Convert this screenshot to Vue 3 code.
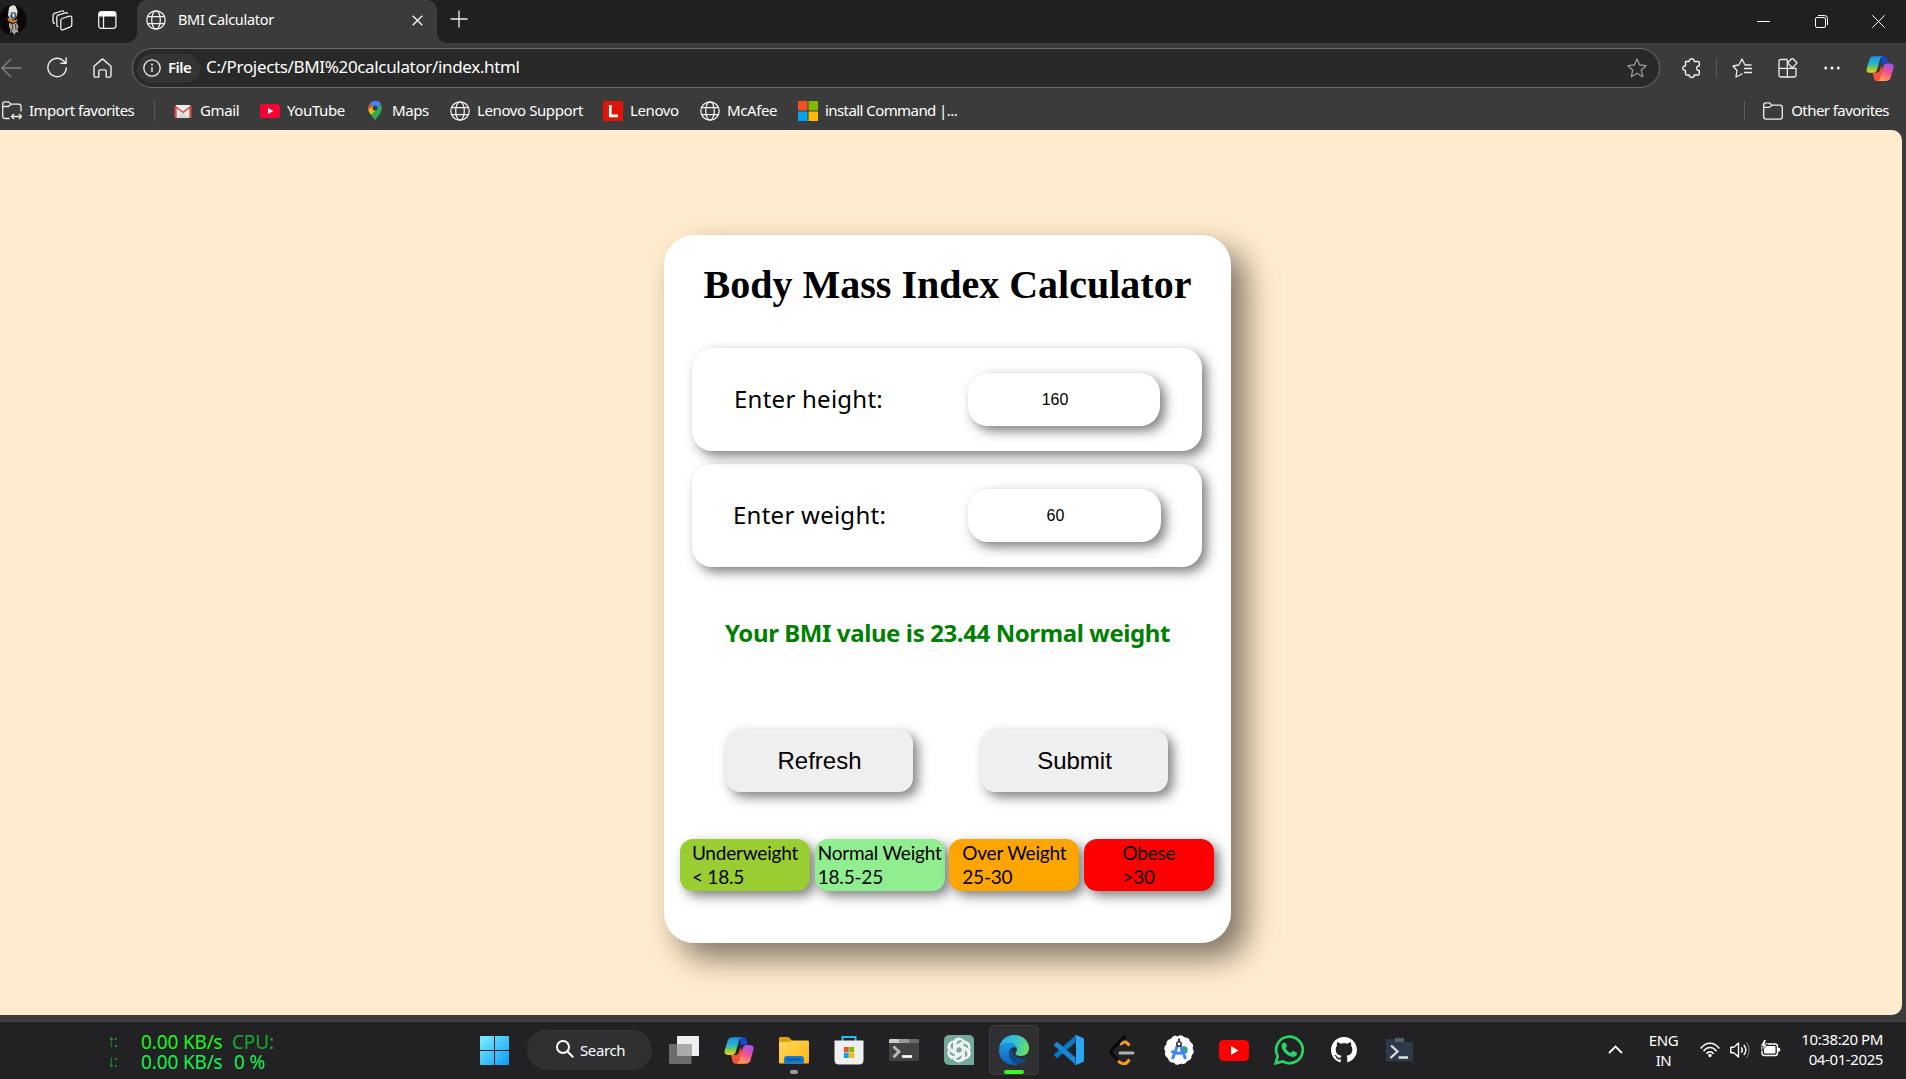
<script setup>
const bookmarks = [
  { icon: 'gmail', label: 'Gmail', w: 87 },
  { icon: 'youtube', label: 'YouTube', w: 105 },
  { icon: 'maps', label: 'Maps', w: 85 },
  { icon: 'globe', label: 'Lenovo Support', w: 153 },
  { icon: 'lenovo', label: 'Lenovo', w: 97 },
  { icon: 'globe', label: 'McAfee', w: 98 },
  { icon: 'ms', label: 'install Command |...', w: 170 },
]
const legend = [
  { name: 'Underweight', range: '< 18.5', cls: 'under' },
  { name: 'Normal Weight', range: '18.5-25', cls: 'normal' },
  { name: 'Over Weight', range: '25-30', cls: 'over' },
  { name: 'Obese', range: '>30', cls: 'obese' },
]
const petals = [0, 60, 120, 180, 240, 300]
</script>

<template>
  <div class="screen">
    <svg width="0" height="0" class="defs">
      <defs>
        <linearGradient id="cpA" x1="0" y1="0" x2="0" y2="1">
          <stop offset="0" stop-color="#1b8fe8" /><stop offset=".45" stop-color="#25b6c8" />
          <stop offset=".7" stop-color="#7cc94f" /><stop offset="1" stop-color="#f2cf1c" />
        </linearGradient>
        <linearGradient id="cpB" x1=".7" y1="0" x2=".3" y2="1">
          <stop offset="0" stop-color="#9a55f0" /><stop offset=".45" stop-color="#ee5090" />
          <stop offset="1" stop-color="#ffa552" />
        </linearGradient>
        <linearGradient id="winG" x1="0" y1="0" x2="1" y2="1">
          <stop offset="0" stop-color="#7df0ff" /><stop offset="1" stop-color="#0a9bfa" />
        </linearGradient>
        <linearGradient id="foldG" x1="0" y1="0" x2="1" y2="1">
          <stop offset="0" stop-color="#ffd75e" /><stop offset="1" stop-color="#fdb813" />
        </linearGradient>
        <linearGradient id="edgeG" x1="0" y1=".3" x2="1" y2=".5">
          <stop offset="0" stop-color="#2aa5ea" /><stop offset=".5" stop-color="#31c3d8" />
          <stop offset="1" stop-color="#6ae05a" />
        </linearGradient>
        <linearGradient id="edgeB" x1="0" y1="0" x2="0" y2="1">
          <stop offset="0" stop-color="#1d9ae6" /><stop offset="1" stop-color="#1160b8" />
        </linearGradient>
        <symbol id="copilot" viewBox="0 0 30 28">
          <path d="M16 .8h3.2c2 0 2.8 1.2 3.3 2.8l1.4 4.6h-4.6c-1.5 0-2.2.8-2.7 2.3z" fill="#1746d0" />
          <path d="M7.2 18.4h5.2c1 0 1.8-.6 2.2-1.8l2.4-6 1.2 8.6-2 6.2c-.5 1.4-1.3 1.9-2.6 1.9h-2c-1.8 0-2.7-1-3.2-2.7z" fill="#f4553a" />
          <path d="M8.6.8H18c-1.8.4-2.5 1.7-3 3.4l-3.2 11c-.6 2-1.5 3.3-3.8 3.3H4.3C1 18.500 0 16.400.8 13.600L3.600 4.600C4.400 2 5.900.8 8.600.8z" fill="url(#cpA)" />
          <path d="M21.600 27.300h-9.200c1.800-.4 2.500-1.700 3-3.400l3.200-11.800c.6-2 1.500-3.500 3.800-3.500h3.500c3.300 0 4.300 2.200 3.500 5l-2.800 9.900c-.8 2.600-2.300 3.800-5 3.800z" fill="url(#cpB)" />
        </symbol>
        <symbol id="globe" viewBox="0 0 20 20">
          <g fill="none" stroke="#f2f2f2" stroke-width="1.25">
            <circle cx="10" cy="10" r="9.200" /><ellipse cx="10" cy="10" rx="4.300" ry="9.200" />
            <path d="M1.700 6.500h16.600M1.700 13.500h16.600" />
          </g>
        </symbol>
        <symbol id="mslogo" viewBox="0 0 20 20">
          <path d="M0 0h9.500v9.500H0z" fill="#f25022" /><path d="M10.500 0H20v9.500h-9.500z" fill="#7fba00" />
          <path d="M0 10.500h9.500V20H0z" fill="#00a4ef" /><path d="M10.500 10.500H20V20h-9.500z" fill="#ffb900" />
        </symbol>
      </defs>
    </svg>

    <header class="tabs">
      <div class="tools-left">
        <svg class="avatar" width="27" height="30" viewBox="0 0 27 30">
          <ellipse cx="12.500" cy="15" rx="14" ry="15" fill="#0c0809" />
          <path d="M9 3c1-3 6-4 7-1l1.500 4-.5 5-3 3h-4L8 10z" fill="#e4e2dd" />
          <path d="M11 7.500l3.500-.5 2 2-.5 4-4 1-2-2z" fill="#3c5870" /><path d="M12.500 8l2 1v3.500l-2-1z" fill="#e8eef0" />
          <path d="M7.500 12.500l3 1.500 5 1 2-1.500-.5 3-4 1.500-5-2z" fill="#c77a22" />
          <path d="M9 18l4 1 3-1.500 2.500 3.500-1 3 1 4-2.500-1-1.500 3-2.500-3-2 1 .5-4-1.500-2z" fill="#aaa39e" />
          <path d="M12 19l1 4-2 4M15.500 19l.5 6" stroke="#4a4240" fill="none" />
        </svg>
        <svg class="ws" width="21" height="21" viewBox="0 0 21 21" fill="none" stroke="#eee" stroke-width="1.300" stroke-linejoin="round">
          <path d="M10 8.500l7.500-2.300c1.300-.4 2.300.3 2.300 1.600v7c0 1-.5 1.700-1.500 2L11 19.800c-1.300.4-2.200-.2-2.200-1.500v-8c0-1 .3-1.500 1.200-1.800z" />
          <path d="M6.600 16.500c-1 .2-1.800-.4-1.800-1.500v-8c0-1 .4-1.600 1.300-1.900l7.400-2.300c1.200-.4 2 .1 2.200 1.200" />
          <path d="M3 13.500c-1.200 0-1.900-.6-1.900-1.600V5.300c0-1 .4-1.600 1.300-1.900L9.600 1c1.200-.4 2 .1 2.200 1" />
        </svg>
        <svg class="vt" width="19" height="18" viewBox="0 0 19 18">
          <rect x=".7" y=".7" width="17.200" height="16.600" rx="2.500" fill="none" stroke="#eee" stroke-width="1.300" />
          <path d="M1 5.500V3a2 2 0 0 1 2-2h12.600a2 2 0 0 1 2 2v2.500z" fill="#fff" /><path d="M5.500 5v12" stroke="#eee" stroke-width="1.300" />
        </svg>
      </div>
      <div class="tab">
        <svg width="20" height="20"><use href="#globe" /></svg>
        <span class="tab-title">BMI Calculator</span>
        <svg class="tab-x" width="11" height="11" viewBox="0 0 11 11"><path d="M.7.7l9.600 9.600M10.300.7L.7 10.300" stroke="#fff" stroke-width="1.300" /></svg>
      </div>
      <svg class="plus" width="18" height="18" viewBox="0 0 18 18"><path d="M9 .5v17M.5 9h17" stroke="#eee" stroke-width="1.300" /></svg>
      <div class="win">
        <svg width="13" height="13" viewBox="0 0 13 13"><path d="M0 6.500h13" stroke="#fff" /></svg>
        <svg width="13" height="13" viewBox="0 0 13 13" fill="none" stroke="#fff"><rect x=".5" y="2.500" width="10" height="10" rx="1.500" /><path d="M3 .5h6.500a3 3 0 0 1 3 3V10" /></svg>
        <svg width="13" height="13" viewBox="0 0 13 13"><path d="M.3.300l12.400 12.400M12.700.3L.3 12.700" stroke="#fff" /></svg>
      </div>
    </header>

    <nav class="toolbar">
      <div class="nav-btns">
        <svg width="21" height="20" viewBox="0 0 21 20" fill="none" stroke="#838383" stroke-width="1.300"><path d="M20.500 10H1M10 1L1 10l9 9" /></svg>
        <svg width="21" height="21" viewBox="0 0 21 21" fill="none" stroke="#eee" stroke-width="1.400"><path d="M19.300 10.500a9.200 9.200 0 1 1-3.200-7L18.800 6M19.100.5V6.300H13.500" /></svg>
        <svg width="19" height="20" viewBox="0 0 19 20" fill="none" stroke="#eee" stroke-width="1.400" stroke-linejoin="round"><path d="M1 8.300L9.500.9 18 8.300v9.500c0 .8-.5 1.300-1.300 1.300h-3.500v-5.600c0-1-.5-1.600-1.500-1.600H7.300c-1 0-1.500.6-1.500 1.600v5.600H2.300c-.8 0-1.300-.5-1.300-1.300z" /></svg>
      </div>
      <div class="address">
        <div class="file">
          <svg width="18" height="18" viewBox="0 0 18 18"><circle cx="9" cy="9" r="8.200" fill="none" stroke="#eee" stroke-width="1.300" /><path d="M9 8v5" stroke="#eee" stroke-width="1.400" /><circle cx="9" cy="5.500" r="1" fill="#eee" /></svg>
          <b>File</b>
        </div>
        <span class="url">C:/Projects/BMI%20calculator/index.html</span>
        <svg class="star" width="20" height="20" viewBox="0 0 20 20" fill="none" stroke="#999" stroke-width="1.300" stroke-linejoin="round"><path d="M10 1l2.700 6 6.400.7-4.800 4.400 1.400 6.600L10 15.300l-5.700 3.400 1.400-6.600L.9 7.700 7.300 7z" /></svg>
      </div>
      <div class="tool-icons">
        <svg class="puz" width="19" height="20" viewBox="0 0 19 20" fill="none" stroke="#eee" stroke-width="1.400" stroke-linejoin="round"><path d="M3.500 3.500h3.800c-.3-3.600 5.200-3.600 4.900 0H16c.8 0 1.300.5 1.300 1.300V8c-3.600-.6-3.600 5 0 4.400v3.300c0 .8-.5 1.300-1.300 1.300h-3.800c.3 3.300-5.200 3.300-4.900 0H4.800c-.8 0-1.300-.5-1.300-1.300v-3.300c-3.600.3-3.600-4.700 0-4.400z" /></svg>
        <i class="sep"></i>
        <svg class="favs" width="21" height="20" viewBox="0 0 21 20" fill="none" stroke="#eee" stroke-width="1.300" stroke-linejoin="round"><path d="M8 17l-4 2 1-6.500L1 8l5.800-1L10 1l3 6h6.500M12 10.500h8M12 14.500h8M8 17l2.500-1.500" /></svg>
        <svg class="apps" width="20" height="20" viewBox="0 0 20 20" fill="none" stroke="#eee" stroke-width="1.300"><path d="M9.300 1.500H2.700C1.600 1.500 1 2.200 1 3.200v14.100c0 1 .7 1.700 1.700 1.700h13.600c1 0 1.700-.7 1.700-1.700v-7H1M9.300 1.500V19" /><rect x="11" y="1.500" width="6.800" height="6.800" rx="1" transform="rotate(45 14.400 4.900)" /></svg>
        <svg class="dots" width="16" height="4" viewBox="0 0 16 4" fill="#f2f2f2"><circle cx="1.700" cy="2" r="1.500" /><circle cx="8" cy="2" r="1.500" /><circle cx="14.300" cy="2" r="1.500" /></svg>
        <svg width="28" height="27"><use href="#copilot" /></svg>
      </div>
    </nav>

    <div class="bookmarks">
      <div class="bm import">
        <svg width="20" height="19" viewBox="0 0 20 19" fill="none" stroke="#eee" stroke-width="1.300"><path d="M7.500 17.500H3c-1.500 0-2.300-.8-2.300-2.300V3C.7 1.500 1.500.8 3 .8h3.500l2.500 2.400h7.700c1.500 0 2.300.8 2.300 2.300v5M.7 5.500h5.500L9 3.200M9.500 15.500h10M12 13l-2.500 2.500L12 18M17 13l2.500 2.500L17 18" /></svg>
        <span class="tight">Import favorites</span>
      </div>
      <i class="sep"></i>
      <div class="bm-list">
        <div v-for="b in bookmarks" :key="b.label" class="bm" :style="{ width: b.w + 'px' }">
          <svg v-if="b.icon === 'gmail'" width="20" height="20" viewBox="0 0 20 20"><path d="M3 4h14v13H3z" fill="#eee" /><path d="M3 17l7-6 7 6z" fill="#d8d8d8" /><path d="M1.500 17V4l8.500 6.500L18.500 4v13h-2.200V7.500L10 12.300 3.700 7.500V17z" fill="#dd4b3e" /></svg>
          <svg v-else-if="b.icon === 'youtube'" width="20" height="20" viewBox="0 0 20 20"><rect y="3" width="20" height="14" rx="3.500" fill="#ff0033" /><path d="M8 7l5.300 3L8 13z" fill="#fff" /></svg>
          <svg v-else-if="b.icon === 'maps'" width="20" height="20" viewBox="0 0 20 20"><path d="M10 20c-.8-4-6.800-6.500-6.800-12.800a6.800 6.800 0 0 1 13.600 0C16.800 13.500 10.800 16 10 20z" fill="#34a853" /><path d="M4.800 2.800a6.800 6.800 0 0 1 11-.4L9.500 9.500z" fill="#4285f4" /><path d="M12.600 7.700L6 13.400C4.500 11.500 3.500 10 3.300 8.500L8 4.500z" fill="#fbbc04" /><path d="M3.300 8.500C3 6 3.500 4.200 4.800 2.800L7.500 5z" fill="#ea4335" /><circle cx="10" cy="7" r="2.500" fill="#263f6e" /></svg>
          <svg v-else-if="b.icon === 'lenovo'" width="20" height="20" viewBox="0 0 20 20"><path d="M0 0h20v20H0z" fill="#e1140a" /><path d="M7.300 4v10.800H15" fill="none" stroke="#fff" stroke-width="2.700" /></svg>
          <svg v-else-if="b.icon === 'ms'" width="20" height="20"><use href="#mslogo" /></svg>
          <svg v-else width="20" height="20"><use href="#globe" /></svg>
          <span :class="{ tight: b.icon === 'ms' }">{{ b.label }}</span>
        </div>
      </div>
      <div class="bm other">
        <i class="sep"></i>
        <svg width="20" height="18" viewBox="0 0 20 18" fill="none" stroke="#eee" stroke-width="1.300"><path d="M3 .8h3.500l2.500 2.400h8c1.500 0 2.300.8 2.300 2.300v9.300c0 1.500-.8 2.300-2.300 2.300H3c-1.500 0-2.300-.8-2.300-2.300V3C.7 1.500 1.500.8 3 .8zM.7 5.300h5.500L9 3.200" /></svg>
        <span class="tight">Other favorites</span>
      </div>
    </div>

    <main class="page">
      <section class="card">
        <h1>Body Mass Index Calculator</h1>
        <div class="field">
          <label>Enter height:</label>
          <div class="input">160</div>
        </div>
        <div class="field second">
          <label class="lw">Enter weight:</label>
          <div class="input wide">60</div>
        </div>
        <p class="result">Your BMI value is 23.44 Normal weight</p>
        <div class="buttons">
          <button>Refresh</button>
          <button>Submit</button>
        </div>
        <div class="legend">
          <div v-for="l in legend" :key="l.name" class="chip" :class="l.cls">
            <div>{{ l.name }}<br />{{ l.range }}</div>
          </div>
        </div>
      </section>
    </main>

    <footer class="taskbar">
      <div class="net">
        <span class="dim arrow">↑:</span><span class="a">0.00 KB/s</span><span class="dim">CPU:</span>
        <span class="dim arrow">↓:</span><span class="b">0.00 KB/s</span><span class="b pc">0 %</span>
      </div>
      <svg class="start" width="29" height="29" viewBox="0 0 29 29"><path d="M0 1a1 1 0 0 1 1-1h13v14H0zM15 0h13a1 1 0 0 1 1 1v13H15zM0 15h14v14H1a1 1 0 0 1-1-1zM15 15h14v13a1 1 0 0 1-1 1H15z" fill="url(#winG)" /></svg>
      <div class="search">
        <svg width="18" height="18" viewBox="0 0 18 18" fill="none" stroke="#fff" stroke-width="2"><circle cx="7" cy="7" r="6" /><path d="M11.500 11.500L17.200 17.200" /></svg>
        <span>Search</span>
      </div>
      <div class="apps-row">
        <div class="slot"><svg width="30" height="30" viewBox="0 0 30 30"><rect x="8" y="1" width="22" height="20" rx="1" fill="#efefef" /><rect y="9" width="22.500" height="20" rx="1" fill="#6c6c6c" /><path d="M8 9h14.500v12H8z" fill="#aaa" /></svg></div>
        <div class="slot"><svg width="30" height="29"><use href="#copilot" /></svg></div>
        <div class="slot"><svg width="30" height="30" viewBox="0 0 30 30"><path d="M0 3.500C0 2.500.6 2 1.500 2h7c1 0 1.500.3 2.200 1L13 5.500V12H0z" fill="#dfa00b" /><path d="M0 7h10l3-1.500h15.500c1 0 1.500.5 1.500 1.500v20c0 1-.5 1.500-1.500 1.500h-27C.5 28.500 0 28 0 27z" fill="url(#foldG)" /><path d="M5 28.500V24c0-2 1-3 3-3h14c2 0 3 1 3 3v4.500z" fill="#1479d0" /><path d="M8 24.500h14" stroke="#0b4f94" stroke-width="1.500" /></svg><i class="run"></i></div>
        <div class="slot"><svg width="30" height="30" viewBox="0 0 30 30"><path d="M8.500 6V2h13v4" fill="none" stroke="#25bdf0" stroke-width="2" /><path d="M.5 5.500h29V25c0 3-1.500 4.500-4.500 4.500H5C2 29.500.5 28 .5 25z" fill="#efefef" /><svg x="9.500" y="12" width="11" height="11"><use href="#mslogo" /></svg></svg></div>
        <div class="slot"><svg width="30" height="22" viewBox="0 0 30 22"><rect width="30" height="22" rx="1.500" fill="#434343" /><path d="M0 4V1.500C0 .5.500 0 1.500 0H10v4z" fill="#ccc" /><path d="M10 0h10v4H10z" fill="#999" /><path d="M20 0h8.500c1 0 1.500.5 1.500 1.500V4H20z" fill="#6b6b6b" /><path d="M4.500 7.500l5.500 5.300-5.500 5.400" fill="none" stroke="#bbb" stroke-width="2.800" /><path d="M13 17.500h10" stroke="#fff" stroke-width="2.700" /></svg></div>
        <div class="slot"><svg width="30" height="30" viewBox="0 0 30 30"><path d="M5 0h20a5 5 0 0 1 5 5v25H5a5 5 0 0 1-5-5V5a5 5 0 0 1 5-5z" fill="#74aa9c" /><g fill="none" stroke="#fff" stroke-width="1.600"><path v-for="a in petals" :key="a" :transform="`rotate(${a} 15 15)`" d="M11.500 17V9.200c0-5.300 6.800-6.800 8.900-2.300M11.500 11l6.700-3.800c4.200-2.300 8.500 1.800 7 6" /></g></svg></div>
        <div class="slot active"><svg width="30" height="30" viewBox="0 0 30 30"><path d="M0 15C0 6.500 6.500 0 15 0s15 6 15 13c0 5-3.500 8-8 8-3.500 0-5.500-1.300-5.500-2.600 0-1 1.500-1.400 1.500-4.200C18 11 14.500 8 10 8 5 8 0 11 0 15z" fill="url(#edgeG)" /><path d="M0 15.500C.3 11 4.500 8 9.500 8c5 0 8.500 3 8.500 6-1-1.800-3-2.500-4.500-1.700C11.500 13.500 8.500 17 11 23c1.500 3.500 5 6 8.500 6.300C17 30 15.500 30 14 30 6 29.500 0 23.500 0 15.500z" fill="url(#edgeB)" /><path d="M13.200 12.600C10 14 9 18 10.500 22c2 5 6.500 7.500 10.500 6.700 3-1 5.500-3.300 7.200-6.200-2.200 1.200-6 1.900-9.500.2-4.500-2.200-7-6-5.500-10.100z" fill="#114a8b" /></svg><i class="run green"></i></div>
        <div class="slot"><svg width="30" height="30" viewBox="0 0 30 30"><path d="M22 0l-1 8L4 22.500c-.6.400-1.200.4-1.700 0L.5 20.800c-.6-.6-.6-1.300 0-1.900z" fill="#0a78c4" /><path d="M22 30l-1-8L4 7.500c-.6-.4-1.200-.4-1.700 0L.5 9.200c-.6.600-.6 1.300 0 1.900z" fill="#1688d4" /><path d="M22 0l7 3c.7.300 1 .8 1 1.500v21c0 .7-.3 1.200-1 1.500l-7 3c-1 .3-1.500 0-2-.5 1.200.8 2-.1 2-1V1.500c0-1-.8-1.800-2-1 .5-.6 1-.8 2-.5z" fill="#2aa7f2" /><path d="M22 8v14l-9-7z" fill="#222224" /></svg></div>
        <div class="slot"><svg width="30" height="30" viewBox="0 0 30 30" fill="none" stroke-linecap="round" stroke-width="3"><path d="M11 9.500l3-2c1.500-.7 3-.5 4.200.6l2.300 2.400M9 26l3 2c2 1 4.500 1 6-.6l2.500-2.900" stroke="#f79f1a" stroke-linecap="butt" /><path d="M15.500 2L3 14.500c-1.300 1.400-1.300 3.100 0 4.500l5 5.500" stroke="#080808" /><path d="M11 18h13" stroke="#b3b1b0" /></svg></div>
        <div class="slot"><svg width="30" height="30" viewBox="0 0 30 30"><circle cx="15" cy="15" r="14" fill="#fff" /><circle cx="15" cy="15" r="14" fill="none" stroke="#fff" stroke-width="1.500" stroke-dasharray="4 3.300" /><circle cx="20" cy="15" r="3.700" fill="#34a853" /><path d="M14 9L8.500 24M16 9l5.500 15M7.500 16c3 3 12 3 15 0" fill="none" stroke="#4285f4" stroke-width="3" /><path d="M15 3.500v4" stroke="#333" stroke-width="2" /><circle cx="15" cy="9" r="2.200" fill="#fff" stroke="#333" stroke-width="1.500" /></svg></div>
        <div class="slot"><svg width="30" height="21" viewBox="0 0 30 21"><rect width="30" height="21" rx="4.500" fill="#f00" /><path d="M12 6l7.500 4.500L12 15z" fill="#fff" /></svg></div>
        <div class="slot"><svg width="30" height="30" viewBox="0 0 30 30"><path d="M1.800 28.200l1.900-7A13.300 13.300 0 1 1 8.700 26.400z" fill="none" stroke="#2bd467" stroke-width="2.700" /><path d="M10.500 7.500c-.6-.4-2.700.4-3 3-.2 3 3 7.500 6.500 9.800 4 2.200 7 2 8.300.2.900-1.300.8-2.600.3-3l-3.200-1.600c-.5-.2-.8 0-1.100.3l-1.300 1.600c-.5.4-3.500-1.200-5.400-4.300-.2-.5.9-1.300 1.300-2.300.3-.7-1.200-3.700-2.400-3.700z" fill="#2bd467" /></svg></div>
        <div class="slot"><svg width="26" height="26" viewBox="0 0 16 16"><path fill="#fff" d="M8 0C3.580 0 0 3.580 0 8c0 3.540 2.290 6.530 5.470 7.590.4.070.55-.17.55-.38 0-.19-.01-.82-.01-1.490-2.010.37-2.530-.49-2.690-.94-.09-.23-.48-.94-.82-1.130-.28-.15-.68-.52-.01-.53.63-.01 1.080.58 1.230.82.720 1.210 1.870.87 2.330.66.070-.52.280-.87.510-1.070-1.780-.2-3.640-.89-3.640-3.950 0-.87.310-1.590.82-2.150-.08-.2-.36-1.020.08-2.120 0 0 .67-.21 2.200.82.640-.18 1.320-.27 2-.27s1.360.09 2 .27c1.530-1.040 2.200-.82 2.200-.82.440 1.100.16 1.920.08 2.120.51.560.82 1.270.82 2.150 0 3.070-1.870 3.750-3.650 3.950.29.250.54.730.54 1.480 0 1.070-.01 1.930-.01 2.200 0 .21.150.46.550.38A8.010 8.010 0 0 0 16 8c0-4.420-3.580-8-8-8z" /></svg></div>
        <div class="slot"><svg width="27" height="24" viewBox="0 0 27 24"><path d="M0 1h27v22.500H0z" fill="#2c3a49" /><path d="M9 0h9v4H9z" fill="#555f6a" /><path d="M18 0h9v4h-9z" fill="#222224" /><path d="M5 7.500l6.500 6-7 6.500" fill="none" stroke="#ddd" stroke-width="2.300" /><path d="M12.500 19.500h9.500" stroke="#ddd" stroke-width="2.600" /></svg></div>
      </div>
      <div class="tray">
        <svg class="caret" width="15" height="9" viewBox="0 0 15 9"><path d="M1 8l6.500-6.500L14 8" fill="none" stroke="#fff" stroke-width="1.800" /></svg>
        <div class="lang"><span>ENG</span><span>IN</span></div>
        <svg class="wifi" width="20" height="16" viewBox="0 0 20 16" fill="none" stroke="#fff" stroke-width="1.600"><path d="M.7 6.500c5.200-7 13.400-7 18.600 0M3.600 9.300c3.600-5 9.200-5 12.800 0M6.500 11.800c2-2.700 5-2.700 7 0" /><circle cx="10" cy="13.500" r="1.700" fill="#fff" stroke="none" /></svg>
        <svg class="vol" width="20" height="18" viewBox="0 0 20 18" fill="none" stroke="#fff" stroke-width="1.400"><path d="M.8 6.300h3L8.500 2v14l-4.700-4.300h-3z" stroke-linejoin="round" /><path d="M11.300 6.300c1.200 1.600 1.200 3.800 0 5.400M13.800 4c2.500 3 2.500 7 0 10" /><path d="M16.500 1.500c3.600 4.500 3.600 10.500 0 15" stroke="#666" /></svg>
        <svg class="bat" width="21" height="17" viewBox="0 0 21 17"><rect x="2" y="4" width="15.500" height="11.500" rx="2.500" fill="none" stroke="#fff" stroke-width="1.400" /><rect x="4" y="6" width="11.500" height="7.500" rx="1" fill="#fff" /><path d="M18 8h1.500c1 0 1 3.500 0 3.500H18z" fill="#fff" /><path d="M4-.5L.5 6h2.700l-1.500 5L7.500 4.300H4.800L6.500-.5z" fill="#fff" stroke="#222224" stroke-width=".8" /></svg>
        <div class="clock"><span>10:38:20 PM</span><span>04-01-2025</span></div>
      </div>
    </footer>
  </div>
</template>

<style>
body { background: #3b3b3b; overflow: hidden; }
</style>

<style scoped>
* { box-sizing: border-box; }
svg { display: block; flex: none; }
.defs { position: absolute; }
.screen { width: 1906px; height: 1079px; display: flex; flex-direction: column; overflow: hidden; background: #3b3b3b; color: #fff; font-family: "Noto Sans", "Open Sans", sans-serif; font-size: 15px; white-space: nowrap; }
.tabs { height: 43px; background: #202020; display: flex; flex: none; }
.tools-left { width: 137px; display: flex; height: 43px; align-items: flex-start; }
.avatar { margin: 5px 0 0 0; }
.ws { margin: 10px 0 0 25px; }
.vt { margin: 11px 0 0 25px; }
.tab { position: relative; width: 300px; height: 43px; background: #3b3b3b; border-radius: 10px 10px 0 0; display: flex; align-items: center; padding: 0 14px 4px 9px; }
.tab::before, .tab::after { content: ""; position: absolute; bottom: 0; width: 10px; height: 10px; }
.tab::before { left: -10px; background: radial-gradient(circle at 0 0, transparent 9.5px, #3b3b3b 10px); }
.tab::after { right: -10px; background: radial-gradient(circle at 100% 0, transparent 9.5px, #3b3b3b 10px); }
.tab-title { margin: -2px 0 0 12px; font-size: 14.500px; letter-spacing: -.3px; }
.tab-x { margin-left: auto; margin-top: 2px; }
.plus { margin: 10px 0 0 13px; }
.win { margin-left: auto; display: flex; gap: 44.500px; padding: 15px 21px 0 0; }

.toolbar { height: 50px; flex: none; display: flex; align-items: center; }
.nav-btns { width: 132px; display: flex; gap: 25px; padding-left: 1px; align-items: center; margin-top: -1px; }
.address { width: 1528px; height: 40px; border: 1px solid #6b6b6b; border-radius: 20px; background: #292929; display: flex; align-items: center; padding: 0 12px 0 4px; }
.file { width: 63px; height: 29px; border-radius: 15px; background: #343434; display: flex; align-items: center; padding-left: 6px; gap: 7px; }
.file b { font-size: 15px; letter-spacing: -.5px; font-weight: 600; margin-top: -2px; }
.url { margin: -3px 0 0 6px; font-size: 17px; letter-spacing: -.34px; }
.star { margin-left: auto; }
.tool-icons { display: flex; align-items: center; }
.sep { display: block; width: 1px; height: 20px; background: #5b5b5b; flex: none; }
.puz { margin: 0 15px 0 22px; }
.favs { margin-left: 15px; }
.apps { margin-left: 25px; }
.dots { margin: 0 26px 0 26px; }

.bookmarks { height: 37px; flex: none; display: flex; align-items: center; padding: 0 17px 2px 2px; }
.bm { display: flex; align-items: center; gap: 7px; font-size: 15px; flex: none; letter-spacing: -.4px; }
.bm span { margin-top: -2px; }
.tight { letter-spacing: -.57px; }
.import { width: 152px; }
.bm-list { display: flex; margin-left: 18px; }
.other { margin-left: auto; }
.other .sep { margin-right: 11px; }
.other .tight { margin-left: 1px; }

.page { width: 1902px; height: 885px; flex: none; background: #ffebcd; border-radius: 0 10px 10px 0; padding: 105px 0 0 664px; color: #000; overflow: hidden; }
.card { width: 567px; height: 708px; border-radius: 30px; background: #fff; box-shadow: 15px 15px 30px rgba(0, 0, 0, .5); display: flex; flex-direction: column; }
h1 { margin: 27px 0 0; height: 46px; text-align: center; font: bold 40px/46px "Liberation Serif", serif; }
.field { margin: 40px 29px 0 28px; height: 103px; flex: none; border-radius: 20px; box-shadow: 5px 5px 12px rgba(0, 0, 0, .5); display: flex; align-items: center; padding-left: 42px; }
.field.second { margin-top: 13px; padding-left: 41px; }
label { width: 234px; font-size: 24px; letter-spacing: .25px; margin-top: -3px; }
.lw { width: 235px; }
.input { width: 192px; height: 53px; border-radius: 20px; background: #fff; box-shadow: 5px 5px 12px rgba(0, 0, 0, .5); font: 16px/53px "Liberation Sans", sans-serif; text-align: center; padding-right: 18px; }
.input.wide { width: 193px; }
.result { margin: 49px 0 0; height: 34px; line-height: 34px; text-align: center; color: green; font-weight: 700; font-size: 24px; letter-spacing: -.4px; }
.buttons { display: flex; gap: 68px; margin: 80px 0 0 62px; }
button { width: 187px; height: 62px; border: 0; border-radius: 14px; background: #efefef; box-shadow: 5px 5px 12px rgba(0, 0, 0, .5); font: 24px "Liberation Sans", sans-serif; color: #000; padding: 0; }
.legend { display: flex; gap: 4.670px; margin: 47px 0 0 16px; }
.chip { width: 130px; height: 52px; border-radius: 13px; box-shadow: 5px 5px 12px rgba(0, 0, 0, .5); display: flex; justify-content: center; font: 19px/24px Lato, sans-serif; letter-spacing: -.2px; padding-top: 2px; }
.under { background: yellowgreen; }
.normal { background: lightgreen; }
.over { background: orange; }
.obese { background: red; }

.taskbar { margin-top: 6px; height: 58px; flex: none; background: #222224; border-top: 1px solid #454545; display: flex; align-items: flex-start; }
.net { width: 480px; padding: 10px 0 0 107px; display: grid; grid-template-columns: 34px 91px 60px; grid-auto-rows: 20px; font-size: 19px; line-height: 20px; letter-spacing: -.15px; color: #1df51d; }
.net .dim { color: #17a832; }
.net .arrow { font-family: "Liberation Sans", sans-serif; font-size: 17px; letter-spacing: -2px; padding-left: 0; }
.net .b { color: #1aef4c; }
.net .pc { padding-left: 2px; }
.start { margin-top: 14px; }
.search { width: 125px; height: 40px; margin: 8px 0 0 18px; border-radius: 20px; background: #303032; border-top: 1px solid #3a3a3c; display: flex; align-items: center; padding-left: 29px; gap: 6px; font-size: 15px; letter-spacing: -.4px; }
.search span { margin-top: -2px; }
.search svg { margin-top: -3px; }
.apps-row { display: flex; margin: 3px 0 0 7px; gap: 5px; }
.slot { width: 50px; height: 50px; display: flex; align-items: center; justify-content: center; position: relative; }
.active { background: #303033; border-radius: 5px; box-shadow: inset 0 0 0 1px #3b3b3d; }
.run { position: absolute; left: 21px; bottom: 1px; width: 8px; height: 4px; border-radius: 2px; background: #9a9a9a; }
.run.green { left: 15px; width: 20px; background: #3cf528; }
.tray { margin-left: auto; display: flex; padding-right: 23px; align-items: flex-start; font-size: 15px; line-height: 20px; letter-spacing: -.4px; }
.caret { margin: 23px 25px 0 0; }
.lang, .clock { display: flex; flex-direction: column; padding-top: 8px; }
.lang { width: 31px; align-items: center; }
.wifi { margin: 20px 10px 0 21px; }
.vol { margin: 19px 10px 0 0; }
.bat { margin: 18px 0 0; }
.clock { align-items: flex-end; width: 102px; padding-top: 7px; }
</style>
